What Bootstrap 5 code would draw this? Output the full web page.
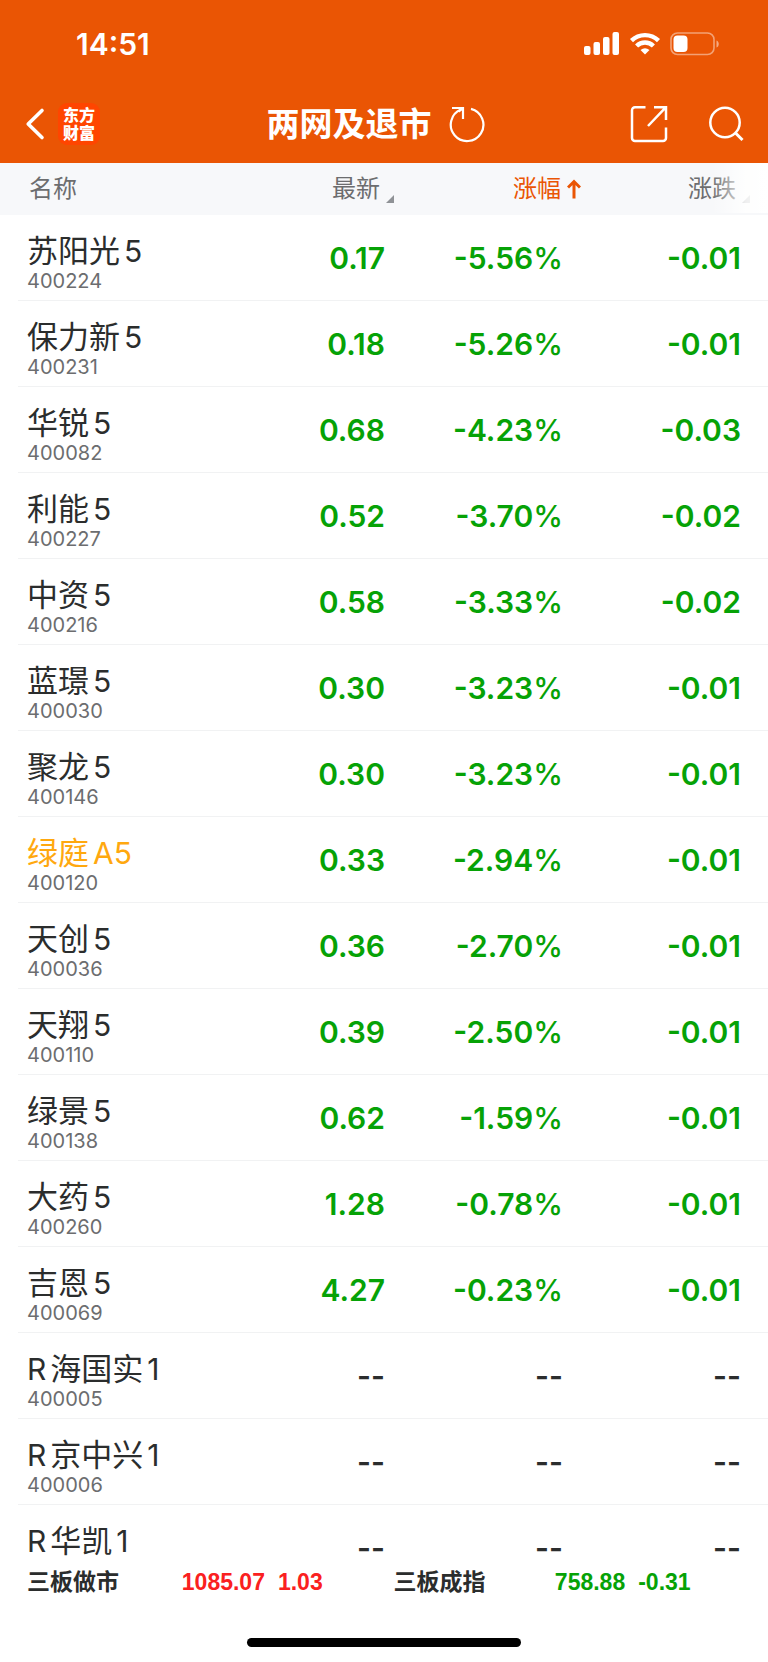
<!DOCTYPE html>
<html lang="zh-CN">
<head>
<meta charset="utf-8">
<meta name="viewport" content="width=device-width, initial-scale=1">
<title>两网及退市</title>
<link href="https://cdn.jsdelivr.net/npm/bootstrap@5.3.0/dist/css/bootstrap.min.css" rel="stylesheet">
<style>
  :root { --brand: #ea5504; --down: #06a206; --up: #fa2020; --ink: #2b2d2d; --muted-ink: #6c6d6f; --rule: #f1f2f3; }
  body { font-family: Inter, "Noto Sans CJK SC", sans-serif; color: var(--ink); background: #fff; }
  .icon-btn { background: none; border: 0; padding: 0; color: inherit; display: flex; }
  .app-head { background: var(--brand); color: #fff; }
  .status-bar { height: 86px; padding: 2px 48px 0 76px; }
  .clock { font-size: 30px; font-weight: 600; line-height: 36px; }
  .title-bar { display: grid; grid-template-columns: 1fr auto 1fr; align-items: center; height: 77px; padding: 0 24px 2px 8px; }
  .title-bar h1 { font-size: 33px; line-height: 44px; font-weight: 700; }
  .brand-logo { width: 42px; height: 42px; border-radius: 9px; background: #ff4500; color: #fff; font-size: 16px; line-height: 18px; font-weight: 900; text-decoration: none; padding: 3px 5px; }
  .quotes { table-layout: fixed; --bs-table-color: inherit; }
  .quotes .num-col { width: 187px; }
  .quotes thead th { background: #f7f8fa; height: 52px; padding: 0; font-weight: 400; vertical-align: middle; }
  .quotes thead th:first-child { padding-left: 29px; color: var(--muted-ink); font-size: 24px; line-height: 36px; }
  .sort-btn { background: none; border: 0; padding: 0; margin-left: auto; display: flex; align-items: center; gap: 6px; font-size: 24px; line-height: 36px; color: var(--muted-ink); }
  .sort-btn svg { align-self: flex-end; margin-bottom: 4px; }
  .sort-btn.active { color: var(--brand); }
  .sort-btn.active svg { align-self: center; margin: 0; }
  .quotes thead th:last-child { padding-right: 18px; }
  .quotes .edge-fade { top: 0; right: 0; bottom: 2px; width: 56px; background: linear-gradient(90deg, rgba(255,255,255,0), rgba(255,255,255,.85) 60%, #fff); pointer-events: none; }
  .quotes tbody td, .quotes tbody th { height: 86px; padding: 0; background: linear-gradient(var(--rule), var(--rule)) 0 100% / 100% 1px no-repeat; }
  .quotes tbody td { font-size: 30px; line-height: 36px; font-weight: 600; color: var(--down); text-align: right; }
  .quotes tbody th { padding: 18px 0 8px 27px; font-weight: 400; color: var(--ink); vertical-align: top; background-position: 18px 100%; }
  .quotes tbody td:nth-child(2) { padding-right: 9px; }
  .quotes tbody td:nth-child(3) { padding-right: 18px; }
  .quotes tbody td:last-child { padding-right: 27px; }
  .quotes tbody tr.idle td { color: var(--ink); }
  .stock { font-size: 31px; line-height: 36px; }
  .stock span { font-size: 30px; }
  .held { color: #ffa80f; }
  .code { font-size: 20px; line-height: 24px; color: var(--muted-ink); }
  .pct { font-weight: 500; }
  .index-bar { padding: 0 8px 0 27px; height: 40px; font: 700 23px/40px "Liberation Sans", "Noto Sans CJK SC", sans-serif; }
  .index-bar a { color: inherit; text-decoration: none; }
  .index-bar .up { color: var(--up); }
  .index-bar .down { color: var(--down); }
  .index-values { gap: 13px; }
  .home-zone { height: 60px; padding-bottom: 15px; }
  .home-pill { width: 274px; height: 9px; border-radius: 5px; background: #000; }
</style>
</head>
<body>
<div class="vh-100 d-flex flex-column overflow-hidden">
  <header class="app-head flex-shrink-0">
    <div class="status-bar d-flex align-items-center justify-content-between">
      <span class="clock">14:51</span>
      <div class="d-flex align-items-center">
        <svg width="36" height="24" viewBox="0 0 36 24" fill="#fff" aria-label="信号"><rect x="0" y="14" width="6.500" height="9" rx="2"/><rect x="9.500" y="10" width="6.500" height="13" rx="2"/><rect x="19" y="5" width="6.500" height="18" rx="2"/><rect x="28.500" y="0" width="6.500" height="23" rx="2"/></svg>
        <svg class="ms-2 me-2" width="34" height="24" viewBox="0 0 34 24" fill="none" stroke="#fff" stroke-width="4.400" aria-label="Wi-Fi"><path d="M3.500 8.600a19.500 19.500 0 0 1 27 0"/><path d="M8.600 14a12 12 0 0 1 16.800 0"/><path d="M12.500 18Q17 14.600 21.500 18L17 22.500z" fill="#fff" stroke="none"/></svg>
        <svg width="50" height="24" viewBox="0 0 50 24" aria-label="电池"><rect x="1" y="1" width="43" height="21.500" rx="6.500" fill="none" stroke="#fff" stroke-opacity=".45" stroke-width="1.600"/><rect x="3.500" y="3.500" width="14" height="16.500" rx="4" fill="#fff"/><path d="M46.500 8.500c3 1 3 6 0 7z" fill="#fff" fill-opacity=".5"/></svg>
      </div>
    </div>
    <nav class="title-bar" aria-label="标题栏">
      <div class="d-flex align-items-center ps-3">
        <button class="icon-btn me-2" type="button" aria-label="返回"><svg width="26" height="34" viewBox="0 0 26 34" fill="none" stroke="#fff" stroke-width="3.600" stroke-linecap="round" stroke-linejoin="round"><path d="M18 3.500 4.200 17 18 30.500"/></svg></button>
        <a class="brand-logo" href="#">东方<br>财富</a>
      </div>
      <div class="d-flex align-items-center">
        <h1 class="mb-0">两网及退市</h1>
        <button class="icon-btn ms-3" type="button" aria-label="刷新"><svg width="38" height="38" viewBox="0 0 38 38" fill="none" stroke="#fff" stroke-width="2.200"><path d="M23 3.900A16.300 16.300 0 1 1 13 4.600"/><path d="M4 3H15V14"/><path d="M14.500 3.500 10.500 6.500"/></svg></button>
      </div>
      <div class="d-flex align-items-center justify-content-end gap-4">
        <button class="icon-btn me-3" type="button" aria-label="分享"><svg width="38" height="38" viewBox="0 0 38 38" fill="none" stroke="#fff" stroke-width="2.500"><path d="M15.500 2.200H5a3 3 0 0 0-3 3V33a3 3 0 0 0 3 3H33a3 3 0 0 0 3-3V22.500"/><path d="M24 2.200H36V15M35.500 2.700 18 21"/></svg></button>
        <button class="icon-btn" type="button" aria-label="搜索"><svg width="36" height="36" viewBox="0 0 36 36" fill="none" stroke="#fff" stroke-width="2.500"><circle cx="17" cy="16.500" r="14.700"/><path d="m27 26.500 7.500 7.500" stroke-width="3"/></svg></button>
      </div>
    </nav>
  </header>

  <main class="flex-grow-1 overflow-hidden">
    <table class="table table-borderless align-middle mb-0 quotes">
      <colgroup><col><col class="num-col"><col class="num-col"><col class="num-col"></colgroup>
      <thead>
        <tr>
          <th scope="col">名称</th>
          <th scope="col"><button class="sort-btn" type="button">最新<svg width="8" height="8" viewBox="0 0 8 8" fill="#8f9296"><path d="M8 0v8H0z"/></svg></button></th>
          <th scope="col" aria-sort="ascending"><button class="sort-btn active" type="button">涨幅<svg width="14" height="20" viewBox="0 0 14 20" fill="none" stroke="currentColor" stroke-width="3"><path d="M7 19.500V2.500M1 8.500 7 2.500l6 6"/></svg></button></th>
          <th scope="col" class="position-relative"><button class="sort-btn" type="button">涨跌<svg width="8" height="8" viewBox="0 0 8 8" fill="#8f9296"><path d="M8 0v8H0z"/></svg></button><span class="edge-fade position-absolute"></span></th>
        </tr>
      </thead>
      <tbody>
        <tr><th scope="row"><div class="stock">苏阳光<span class="ms-1">5</span></div><div class="code">400224</div></th><td>0.17</td><td>-5.56<span class="pct">%</span></td><td>-0.01</td></tr>
        <tr><th scope="row"><div class="stock">保力新<span class="ms-1">5</span></div><div class="code">400231</div></th><td>0.18</td><td>-5.26<span class="pct">%</span></td><td>-0.01</td></tr>
        <tr><th scope="row"><div class="stock">华锐<span class="ms-1">5</span></div><div class="code">400082</div></th><td>0.68</td><td>-4.23<span class="pct">%</span></td><td>-0.03</td></tr>
        <tr><th scope="row"><div class="stock">利能<span class="ms-1">5</span></div><div class="code">400227</div></th><td>0.52</td><td>-3.70<span class="pct">%</span></td><td>-0.02</td></tr>
        <tr><th scope="row"><div class="stock">中资<span class="ms-1">5</span></div><div class="code">400216</div></th><td>0.58</td><td>-3.33<span class="pct">%</span></td><td>-0.02</td></tr>
        <tr><th scope="row"><div class="stock">蓝璟<span class="ms-1">5</span></div><div class="code">400030</div></th><td>0.30</td><td>-3.23<span class="pct">%</span></td><td>-0.01</td></tr>
        <tr><th scope="row"><div class="stock">聚龙<span class="ms-1">5</span></div><div class="code">400146</div></th><td>0.30</td><td>-3.23<span class="pct">%</span></td><td>-0.01</td></tr>
        <tr><th scope="row"><div class="stock held">绿庭<span class="ms-1">A5</span></div><div class="code">400120</div></th><td>0.33</td><td>-2.94<span class="pct">%</span></td><td>-0.01</td></tr>
        <tr><th scope="row"><div class="stock">天创<span class="ms-1">5</span></div><div class="code">400036</div></th><td>0.36</td><td>-2.70<span class="pct">%</span></td><td>-0.01</td></tr>
        <tr><th scope="row"><div class="stock">天翔<span class="ms-1">5</span></div><div class="code">400110</div></th><td>0.39</td><td>-2.50<span class="pct">%</span></td><td>-0.01</td></tr>
        <tr><th scope="row"><div class="stock">绿景<span class="ms-1">5</span></div><div class="code">400138</div></th><td>0.62</td><td>-1.59<span class="pct">%</span></td><td>-0.01</td></tr>
        <tr><th scope="row"><div class="stock">大药<span class="ms-1">5</span></div><div class="code">400260</div></th><td>1.28</td><td>-0.78<span class="pct">%</span></td><td>-0.01</td></tr>
        <tr><th scope="row"><div class="stock">吉恩<span class="ms-1">5</span></div><div class="code">400069</div></th><td>4.27</td><td>-0.23<span class="pct">%</span></td><td>-0.01</td></tr>
        <tr class="idle"><th scope="row"><div class="stock"><span class="me-1">R</span>海国实<span class="ms-1">1</span></div><div class="code">400005</div></th><td>--</td><td>--</td><td>--</td></tr>
        <tr class="idle"><th scope="row"><div class="stock"><span class="me-1">R</span>京中兴<span class="ms-1">1</span></div><div class="code">400006</div></th><td>--</td><td>--</td><td>--</td></tr>
        <tr class="idle"><th scope="row"><div class="stock"><span class="me-1">R</span>华凯<span class="ms-1">1</span></div></th><td>--</td><td>--</td><td>--</td></tr>
      </tbody>
    </table>
  </main>

  <footer class="flex-shrink-0 bg-white">
    <div class="index-bar d-flex">
      <a class="d-flex w-50 pe-2" href="#"><span>三板做市</span><span class="index-values up d-flex flex-grow-1 justify-content-center"><span>1085.07</span><span>1.03</span></span></a>
      <a class="d-flex w-50" href="#"><span>三板成指</span><span class="index-values down d-flex flex-grow-1 justify-content-center"><span>758.88</span><span>-0.31</span></span></a>
    </div>
    <div class="home-zone d-flex align-items-end justify-content-center"><div class="home-pill"></div></div>
  </footer>
</div>
<script src="https://cdn.jsdelivr.net/npm/bootstrap@5.3.0/dist/js/bootstrap.bundle.min.js"></script>
</body>
</html>
